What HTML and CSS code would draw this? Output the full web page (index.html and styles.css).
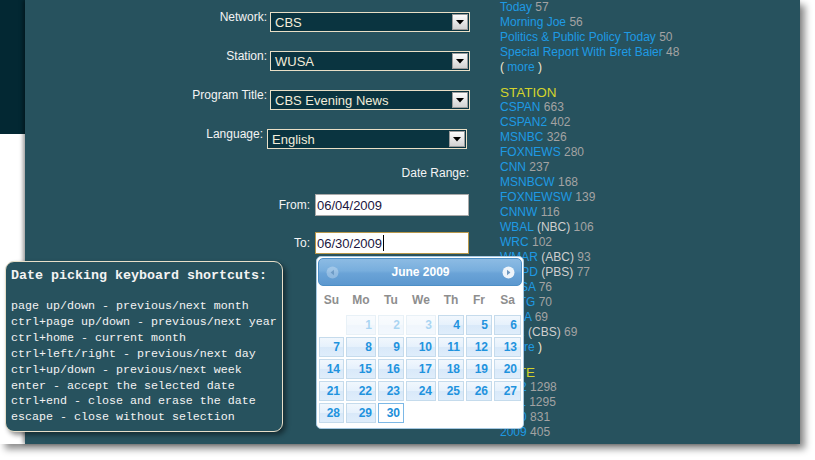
FILE: index.html
```html
<!DOCTYPE html>
<html>
<head>
<meta charset="utf-8">
<title>Search</title>
<link rel="stylesheet" href="styles.css">
</head>
<body>
<div class="shot">
  <div class="rail"><div class="rail-block"></div></div>
  <div class="panel">
    <form class="search">
      <div class="row">
        <label class="lbl">Network:</label>
        <div class="select"><span>CBS</span><span class="arrow"><svg width="8" height="5" viewBox="0 0 8 5"><path d="M0 0h8L4 4.5z" fill="#000"/></svg></span></div>
      </div>
      <div class="row">
        <label class="lbl">Station:</label>
        <div class="select"><span>WUSA</span><span class="arrow"><svg width="8" height="5" viewBox="0 0 8 5"><path d="M0 0h8L4 4.5z" fill="#000"/></svg></span></div>
      </div>
      <div class="row">
        <label class="lbl">Program Title:</label>
        <div class="select"><span>CBS Evening News</span><span class="arrow"><svg width="8" height="5" viewBox="0 0 8 5"><path d="M0 0h8L4 4.5z" fill="#000"/></svg></span></div>
      </div>
      <div class="row row-lang">
        <label class="lbl">Language:</label>
        <div class="select"><span>English</span><span class="arrow"><svg width="8" height="5" viewBox="0 0 8 5"><path d="M0 0h8L4 4.5z" fill="#000"/></svg></span></div>
      </div>
      <div class="range">Date Range:</div>
      <div class="row row-date">
        <label class="lbl">From:</label>
        <div class="input">06/04/2009</div>
      </div>
      <div class="row row-date">
        <label class="lbl">To:</label>
        <div class="input focus">06/30/2009<span class="caret"></span></div>
      </div>
    </form>

    <aside class="facets">
      <ul>
        <li><a>Today</a> 57</li>
        <li><a>Morning Joe</a> 56</li>
        <li><a>Politics &amp; Public Policy Today</a> 50</li>
        <li><a>Special Report With Bret Baier</a> 48</li>
        <li class="more">( <a>more</a> )</li>
      </ul>
      <h3>STATION</h3>
      <ul>
        <li><a>CSPAN</a> 663</li>
        <li><a>CSPAN2</a> 402</li>
        <li><a>MSNBC</a> 326</li>
        <li><a>FOXNEWS</a> 280</li>
        <li><a>CNN</a> 237</li>
        <li><a>MSNBCW</a> 168</li>
        <li><a>FOXNEWSW</a> 139</li>
        <li><a>CNNW</a> 116</li>
        <li><a>WBAL</a> <span class="aff">(NBC)</span> 106</li>
        <li><a>WRC</a> 102</li>
        <li><a>WMAR</a> <span class="aff">(ABC)</span> 93</li>
        <li><a>WMPD</a> <span class="aff">(PBS)</span> 77</li>
        <li><a>WUSA</a> 76</li>
        <li><a>WTTG</a> 70</li>
        <li><a>WJLA</a> 69</li>
        <li><a>WJZ</a> <span class="aff">(CBS)</span> 69</li>
        <li class="more">( <a>more</a> )</li>
      </ul>
      <h3>DATE</h3>
      <ul>
        <li><a>2012</a> 1298</li>
        <li><a>2011</a> 1295</li>
        <li><a>2010</a> 831</li>
        <li><a>2009</a> 405</li>
      </ul>
    </aside>
  </div>

  <div class="help"><div class="help-title">Date picking keyboard shortcuts:</div><div class="help-gap"></div><div>page up/down - previous/next month</div><div>ctrl+page up/down - previous/next year</div><div>ctrl+home - current month</div><div>ctrl+left/right - previous/next day</div><div>ctrl+up/down - previous/next week</div><div>enter - accept the selected date</div><div>ctrl+end - close and erase the date</div><div>escape - close without selection</div></div>

  <div class="dp">
    <div class="dp-head">
      <span class="nav"><svg width="13" height="13" viewBox="0 0 13 13"><circle cx="6.5" cy="6.5" r="6" fill="#ffffff" fill-opacity="0.28"/><path d="M8 3.8v5.4L4.6 6.5z" fill="#4f7fae" fill-opacity="0.55"/></svg></span>
      <span class="dp-title">June 2009</span>
      <span class="nav"><svg width="13" height="13" viewBox="0 0 13 13"><circle cx="6.5" cy="6.5" r="6" fill="#eef4fa"/><path d="M5 3.8v5.4L8.4 6.5z" fill="#6f98c0"/></svg></span>
    </div>
    <div class="dp-grid dp-names">
      <span>Su</span><span>Mo</span><span>Tu</span><span>We</span><span>Th</span><span>Fr</span><span>Sa</span>
    </div>
    <div class="dp-grid dp-days">
      <span class="empty"></span>
      <span class="day off">1</span><span class="day off">2</span><span class="day off">3</span>
      <span class="day">4</span><span class="day">5</span><span class="day">6</span>
      <span class="day">7</span><span class="day">8</span><span class="day">9</span><span class="day">10</span><span class="day">11</span><span class="day">12</span><span class="day">13</span>
      <span class="day">14</span><span class="day">15</span><span class="day">16</span><span class="day">17</span><span class="day">18</span><span class="day">19</span><span class="day">20</span>
      <span class="day">21</span><span class="day">22</span><span class="day">23</span><span class="day">24</span><span class="day">25</span><span class="day">26</span><span class="day">27</span>
      <span class="day">28</span><span class="day">29</span><span class="day active">30</span>
    </div>
  </div>
</div>
</body>
</html>
```
FILE: styles.css
```css
* { box-sizing: border-box; }
html, body { margin: 0; padding: 0; background: #fff; }
body {
  font-family: "Liberation Sans", Arial, sans-serif;
  font-size: 12px;
  width: 815px;
  height: 460px;
  overflow: hidden;
}
.shot {
  position: relative;
  width: 800px;
  height: 444px;
  display: flex;
  background: #fff;
  box-shadow: 5px 5px 7px rgba(0, 0, 0, 0.45);
}
.rail { width: 25px; flex: none; }
.rail-block { height: 134px; background: #032833; }
.panel {
  flex: 1;
  display: flex;
  background: #27525e;
  box-shadow: -2px 0 4px rgba(0, 0, 0, 0.4);
}

/* form */
.search {
  width: 445px;
  flex: none;
  padding-top: 12px;
  display: flex;
  flex-direction: column;
}
.row {
  display: flex;
  align-items: flex-start;
  gap: 3px;
  margin-bottom: 19px;
}
.lbl {
  width: 242px;
  flex: none;
  text-align: right;
  color: #f4f4f4;
  font-size: 12px;
  line-height: 14px;
  margin-top: -2px;
}
.row-lang { gap: 4px; }
.row-lang .lbl { width: 238px; }
.select {
  width: 200px;
  height: 20px;
  border: 1px solid #e9dfc6;
  background: #0a3440;
  display: flex;
  align-items: center;
  justify-content: space-between;
  padding-left: 4px;
  color: #f3edda;
  font-size: 13px;
}
.arrow {
  width: 16px;
  height: 16px;
  margin-right: 1px;
  background: linear-gradient(#fbfbfb, #d2d2d2);
  border: 1px solid #9c9c9c;
  display: flex;
  align-items: center;
  justify-content: center;
}
.range {
  width: 444px;
  text-align: right;
  color: #f4f4f4;
  line-height: 14px;
  margin-top: -2px;
  margin-bottom: 14px;
}
.row-date { align-items: center; gap: 5px; margin-bottom: 16px; }
.row-date .lbl { width: 285px; margin-top: 0; }
.input {
  width: 154px;
  height: 22px;
  border: 1px solid #a9a9a9;
  background: #fff;
  color: #1b1540;
  font-size: 13px;
  padding-left: 1px;
  display: flex;
  align-items: center;
}
.input.focus { border-color: #b9984a; }
.caret {
  width: 1px;
  height: 16px;
  background: #000;
  margin-left: 1px;
}

/* sidebar */
.facets {
  margin-left: 30px;
  font-size: 12px;
  line-height: 15px;
  color: #a3a3a3;
}
.facets ul { list-style: none; margin: 0; padding: 0; }
.facets a { color: #1e9ae4; text-decoration: none; }
.facets .aff { color: #cfcfcf; }
.facets .more { color: #f2ead4; }
.facets h3 {
  margin: 10px 0 0;
  font-weight: normal;
  font-size: 13.5px;
  line-height: 15px;
  color: #d3d22c;
}

/* help tooltip */
.help {
  position: absolute;
  left: 5px;
  top: 261px;
  width: 278px;
  height: 171px;
  border: 1px solid #e7dfc9;
  border-radius: 9px;
  background: #27525e;
  box-shadow: 3px 3px 5px rgba(0, 0, 0, 0.45);
  padding: 6px 0 0 5px;
  font-family: "Liberation Mono", "Courier New", monospace;
  font-size: 11.67px;
  line-height: 15.9px;
  color: #f3f3f3;
  white-space: pre;
}
.help-title { font-weight: bold; font-size: 13.33px; line-height: 16px; }
.help-gap { height: 15px; }

/* datepicker */
.dp {
  position: absolute;
  left: 316px;
  top: 256px;
  width: 208px;
  height: 173px;
  background: #fff;
  border: 1px solid #a6c9e2;
  border-radius: 5px;
  padding: 1px 1px 0;
}
.dp-head {
  height: 28px;
  border: 1px solid #4d8fc6;
  border-radius: 5px;
  background: linear-gradient(#8cbbe3 0%, #78aedd 45%, #6aa3d7 55%, #5c98cf 100%);
  display: flex;
  align-items: center;
  justify-content: space-between;
  padding: 0 6px 0 7px;
  color: #fff;
  font-weight: bold;
  font-size: 12px;
}
.nav { display: flex; }
.dp-grid {
  display: grid;
  grid-template-columns: 25px 30px 26px 30px 26px 26px 27px;
  gap: 2px;
  padding-left: 1px;
}
.dp-names {
  margin-top: 3px;
  height: 22px;
  align-items: center;
  text-align: center;
  color: #8e8e8e;
  font-weight: bold;
  font-size: 12px;
}
.dp-days {
  margin-top: 4px;
  grid-auto-rows: 20px;
}
.day {
  border: 1px solid #c5dbec;
  background: linear-gradient(#f1f7fd 0%, #e6f1fc 48%, #d9e9f9 52%, #dfedfb 100%);
  color: #1f93de;
  font-weight: bold;
  font-size: 12px;
  line-height: 18px;
  text-align: right;
  padding-right: 3px;
}
.day.off { opacity: 0.38; }
.day.active {
  background: #fff;
  border-color: #7cb8e6;
  color: #1b8ed9;
}
```
